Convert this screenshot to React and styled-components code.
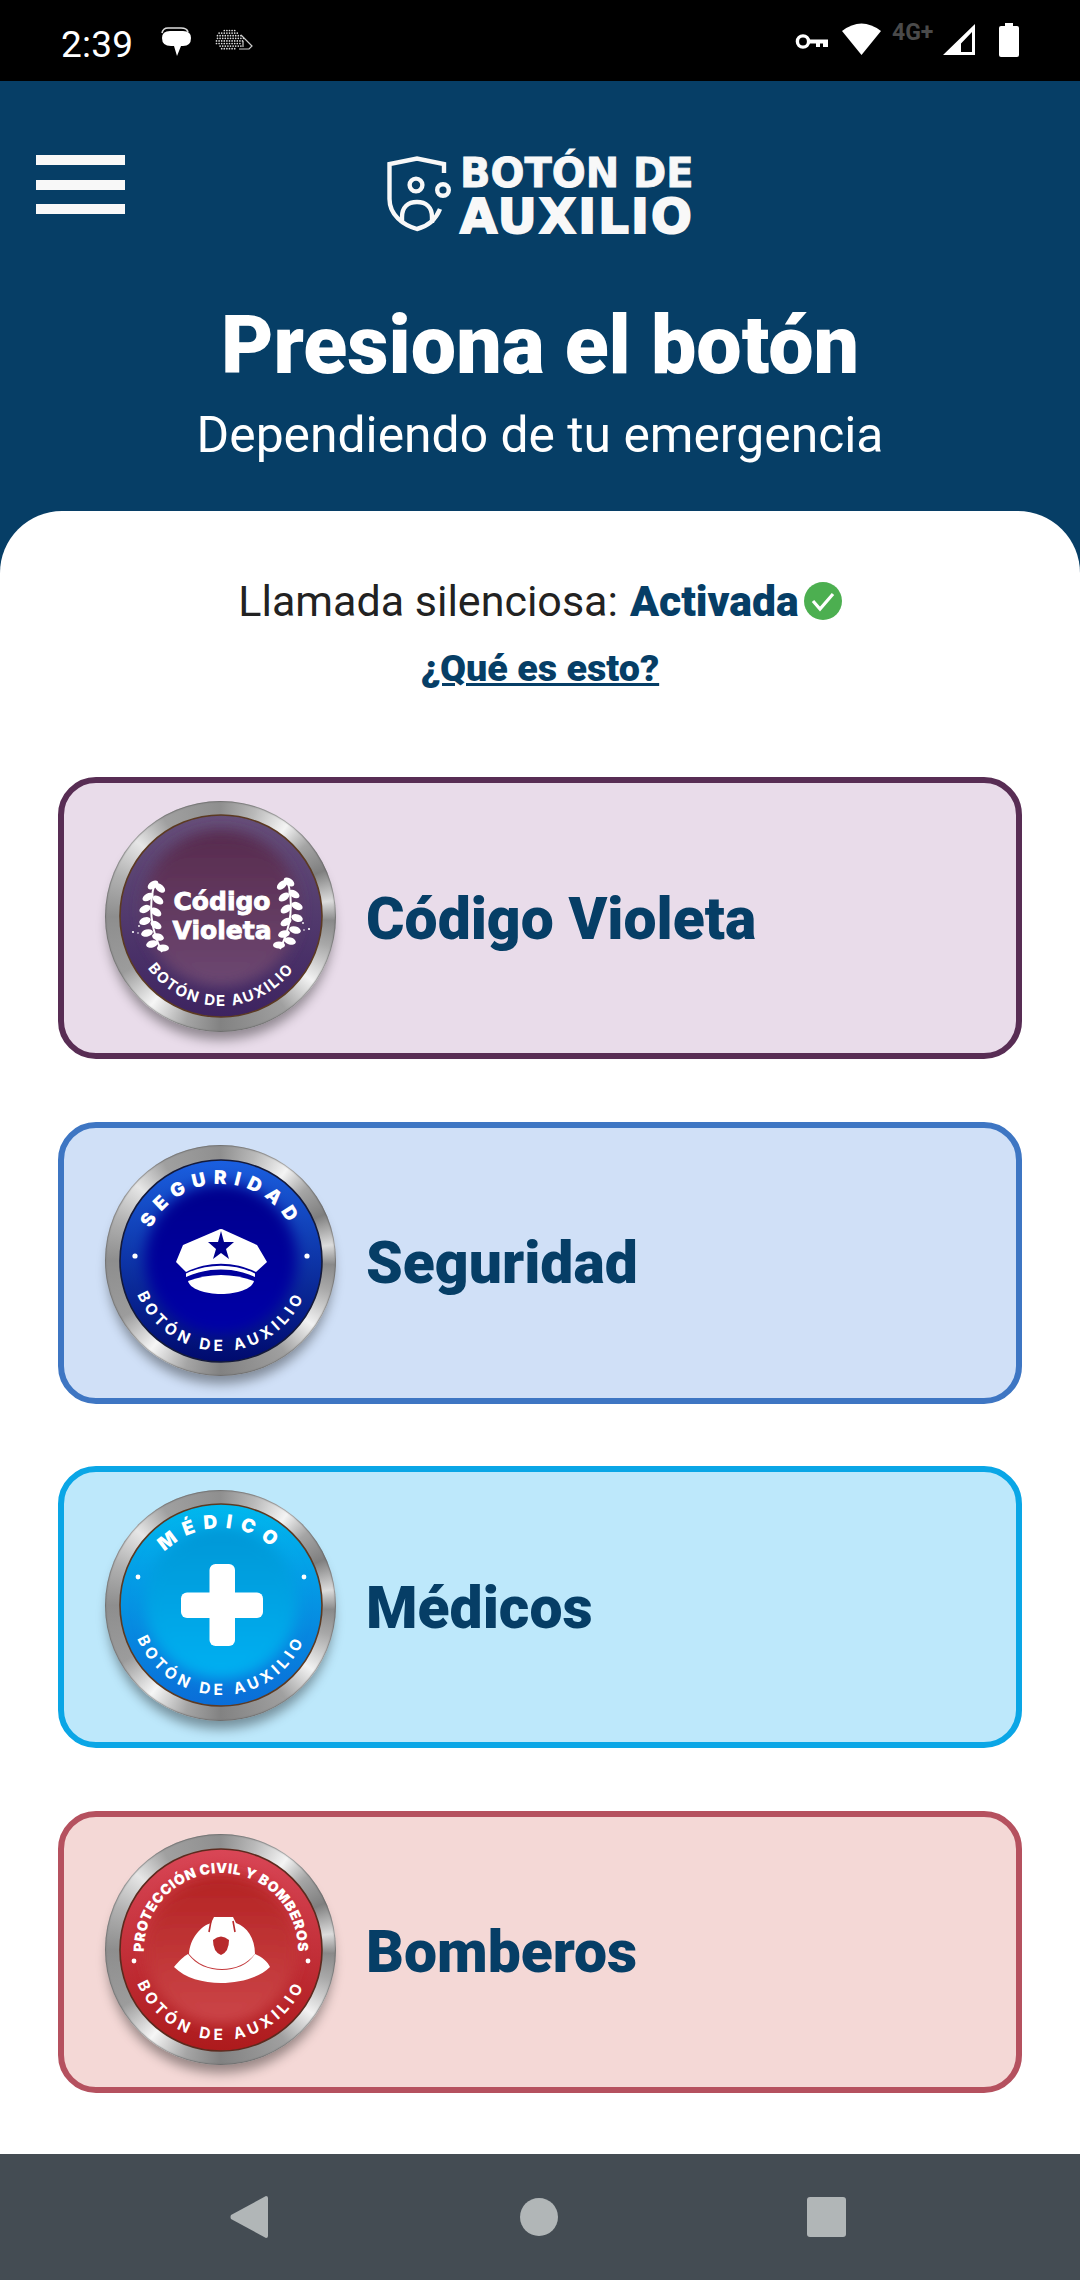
import { styled, createGlobalStyle } from 'styled-components';

const GlobalStyle = createGlobalStyle`
	html, body {
		margin: 0;
		padding: 0;
		background: #fff;
	}
	body {
		font-family: Roboto, "Liberation Sans", sans-serif;
	}
`;

const BLUE = '#063e66';
const WIDE_FONT = '"DejaVu Sans", Inter, sans-serif';
const BADGE_FONT = 'Inter, "Open Sans", sans-serif';

const Page = styled.div`
	width: 1080px;
	height: 2280px;
	display: flex;
	flex-direction: column;
	background: ${BLUE};
	overflow: hidden;
`;

const StatusBar = styled.div`
	height: 81px;
	flex: none;
	background: #000;
	display: flex;
	justify-content: space-between;
	padding: 0 61px 0 61px;
	box-sizing: border-box;
`;

const StatusGroup = styled.div`
	display: flex;
	align-items: flex-start;
	padding-top: 23px;
`;

const Time = styled.span`
	color: #fff;
	font-size: 37px;
	line-height: 38px;
	margin-top: 3px;
	margin-right: 27px;
	letter-spacing: 0.2px;
`;

const StatusIcon = styled.svg`
	display: block;
	flex: none;
	margin-top: ${(p) => p.$top || 0}px;
	margin-left: ${(p) => p.$left || 0}px;
`;

const NetworkLabel = styled.span`
	color: #4a4a4a;
	font-size: 23px;
	font-weight: 700;
	line-height: 20px;
	margin-left: 11px;
	width: 44px;
	white-space: nowrap;
`;

const Header = styled.header`
	height: 430px;
	flex: none;
	padding-top: 65px;
	box-sizing: border-box;
	color: #fff;
	text-align: center;
`;

const TopRow = styled.div`
	display: grid;
	grid-template-columns: 1fr auto 1fr;
	padding: 0 36px;
	align-items: start;
`;

const Hamburger = styled.div`
	width: 89px;
	display: flex;
	flex-direction: column;
	gap: 14.5px;
	padding-top: 9px;
`;

const HamburgerBar = styled.span`
	height: 10px;
	background: #f8f8f8;
`;

const Logo = styled.div`
	display: flex;
	align-items: flex-start;
	gap: 8px;
	color: #f8f8f8;
	padding-top: 5px;
`;

const LogoMark = styled.svg`
	display: block;
	flex: none;
	margin-top: 4px;
`;

const LogoWords = styled.div`
	display: flex;
	flex-direction: column;
	text-align: left;
	font-family: ${WIDE_FONT};
	font-weight: 700;
`;

const LogoTop = styled.span`
	font-size: 40px;
	line-height: 44px;
	white-space: nowrap;
	-webkit-text-stroke: 0.8px #f8f8f8;
`;

const LogoBottom = styled.span`
	font-size: 48px;
	line-height: 36px;
	letter-spacing: 2.2px;
	white-space: nowrap;
	margin-top: 3px;
	-webkit-text-stroke: 2px #f8f8f8;
`;

const Title = styled.h1`
	margin: 64px 0 0;
	font-size: 80.7px;
	font-weight: 900;
	line-height: 96px;
`;

const Subtitle = styled.p`
	margin: 11px 0 0;
	font-size: 49.8px;
	font-weight: 400;
	line-height: 60px;
`;

const Sheet = styled.main`
	flex: 1;
	background: #fff;
	border-radius: 62px 62px 0 0;
	padding-top: 66px;
	box-sizing: border-box;
`;

const SilentRow = styled.div`
	display: flex;
	justify-content: center;
	align-items: center;
	height: 48px;
	font-size: 43px;
	color: #222;
`;

const SilentState = styled.strong`
	font-size: 42.7px;
	font-weight: 900;
	color: ${BLUE};
	margin-left: 12px;
	margin-right: 5px;
`;

const WhatLink = styled.a`
	display: block;
	margin-top: 20px;
	text-align: center;
	font-size: 37.7px;
	font-weight: 900;
	line-height: 46px;
	color: ${BLUE};
	text-decoration: underline;
	text-decoration-thickness: 3px;
`;

const CardList = styled.div`
	display: flex;
	flex-direction: column;
	gap: 62.5px;
	margin: 86px 58px 0;
`;

const Card = styled.button`
	height: 282px;
	box-sizing: border-box;
	display: flex;
	align-items: center;
	gap: 30px;
	padding: 0 0 0 41px;
	border: 6px solid ${(p) => p.$border};
	border-radius: 38px;
	background: ${(p) => p.$fill};
	font-family: inherit;
	text-align: left;
`;

const CardLabel = styled.span`
	font-size: 58.8px;
	font-weight: 900;
	color: ${BLUE};
`;

const Ring = styled.div`
	width: 231px;
	height: 231px;
	flex: none;
	margin-bottom: 4px;
	border-radius: 50%;
	display: flex;
	align-items: center;
	justify-content: center;
	background: conic-gradient(
		#8f8f8f 0deg,
		#b9b9b9 18deg,
		#f4f4f4 36deg,
		#a5a5a5 50deg,
		#7f7f7f 66deg,
		#dcdcdc 82deg,
		#8a8a8a 92deg,
		#a8a8a8 105deg,
		#f2f2f2 125deg,
		#a0a0a0 145deg,
		#828282 180deg,
		#a5a5a5 198deg,
		#f6f6f6 218deg,
		#9c9c9c 240deg,
		#8e8e8e 270deg,
		#b2b2b2 292deg,
		#e6e6e6 312deg,
		#a0a0a0 330deg,
		#8f8f8f 360deg
	);
	box-shadow:
		0 11px 12px -3px rgba(0, 0, 0, 0.38),
		inset 0 0 1px 1px rgba(90, 90, 90, 0.55);
`;

const BadgeText = styled.text`
	font-family: ${(p) => p.$font || BADGE_FONT};
	font-weight: ${(p) => p.$weight || 700};
	font-size: ${(p) => p.$size}px;
	letter-spacing: ${(p) => p.$spacing || 0}px;
	fill: #fff;
	stroke: #fff;
	stroke-width: ${(p) => p.$stroke || 0}px;
	text-anchor: middle;
`;

const NavBar = styled.nav`
	height: 126px;
	flex: none;
	background: #444c53;
	display: flex;
	align-items: center;
	padding: 0 234px 0 230px;
	justify-content: space-between;
	box-sizing: border-box;
`;

const NavIcon = styled.svg`
	display: block;
	fill: #b1b6b7;
	margin-left: ${(p) => p.$shift || 0}px;
`;

const TOP_ARC = 'M25 102 A77 77 0 0 1 179 102';
const BOTTOM_ARC = 'M12 102 A90 90 0 0 0 192 102';

const Disc = ({ id, outerTop, outerBottom, innerTop, innerBottom, rim, innerSize = 76, innerY = 100, children }) => (
	<svg width="204" height="204" viewBox="0 0 204 204">
		<defs>
			<linearGradient id={`${id}-outer`} x1="0" y1="0" x2="0" y2="1">
				<stop offset="0" stopColor={outerTop} />
				<stop offset="1" stopColor={outerBottom} />
			</linearGradient>
			<linearGradient id={`${id}-inner`} x1="0" y1="0" x2="0" y2="1">
				<stop offset="0" stopColor={innerTop} />
				<stop offset="1" stopColor={innerBottom} />
			</linearGradient>
			<filter id={`${id}-blur`} x="-20%" y="-20%" width="140%" height="140%">
				<feGaussianBlur stdDeviation="7" />
			</filter>
			<path id={`${id}-top`} d={TOP_ARC} />
			<path id={`${id}-bottom`} d={BOTTOM_ARC} />
		</defs>
		<circle cx="102" cy="102" r="101" fill={`url(#${id}-outer)`} stroke={rim} strokeWidth="1.6" />
		<circle cx="102" cy={innerY} r={innerSize} fill={`url(#${id}-inner)`} filter={`url(#${id}-blur)`} />
		{children}
	</svg>
);

const BottomLabel = ({ id, size = 15.5, spacing = 4.2 }) => (
	<BadgeText $size={size} $spacing={spacing}>
		<textPath href={`#${id}-bottom`} startOffset="50%">
			BOTÓN DE AUXILIO
		</textPath>
	</BadgeText>
);

const TopLabel = ({ id, size, spacing, weight, children }) => (
	<BadgeText $size={size} $spacing={spacing} $weight={weight}>
		<textPath href={`#${id}-top`} startOffset="50%">
			{children}
		</textPath>
	</BadgeText>
);

const LEAVES = [
	[34, 71, -35],
	[41, 74, 40],
	[29, 83, -30],
	[39, 86, 35],
	[26, 95, -25],
	[37, 98, 35],
	[26, 107, -20],
	[37, 111, 30],
	[28, 119, -15],
	[39, 123, 15],
	[33, 130, -15],
	[44, 134, 0],
];

const Laurel = ({ mirrored }) => (
	<g transform={mirrored ? 'translate(204 -3) scale(-1 1)' : undefined}>
		<path d="M36 68 C31 85 29 110 43 138" fill="none" stroke="#fff" strokeWidth="2" />
		{LEAVES.map(([x, y, angle]) => (
			<ellipse key={`${x}-${y}`} cx={x} cy={y} rx="6" ry="3.6" fill="#fff" transform={`rotate(${angle} ${x} ${y})`} />
		))}
		<circle cx="20" cy="112" r="0.9" fill="#fff" />
		<circle cx="14" cy="118" r="1.1" fill="#fff" />
		<circle cx="19" cy="119" r="0.8" fill="#fff" />
	</g>
);

const VioletBadge = () => (
	<Disc
		id="violet"
		outerTop="#66507a"
		outerBottom="#3d2360"
		innerTop="#572a4d"
		innerBottom="#6d4872"
		rim="#5c3a22"
		innerSize={78}
		innerY={94}
	>
		<Laurel />
		<Laurel mirrored />
		<BadgeText x="103" y="96" $size={25} $font={WIDE_FONT} $stroke={0.9}>
			Código
		</BadgeText>
		<BadgeText x="103" y="125" $size={25} $font={WIDE_FONT} $stroke={0.9}>
			Violeta
		</BadgeText>
		<BottomLabel id="violet" size={15} spacing={1.8} />
	</Disc>
);

const SecurityBadge = () => (
	<Disc
		id="security"
		outerTop="#1a5fe0"
		outerBottom="#000a6e"
		innerTop="#00008c"
		innerBottom="#0000a8"
		rim="#141a3a"
	>
		<TopLabel id="security" size={19} spacing={7} weight={900}>
			SEGURIDAD
		</TopLabel>
		<circle cx="16" cy="97" r="2.6" fill="#fff" />
		<circle cx="188" cy="97" r="2.6" fill="#fff" />
		<path
			d="M99 71 Q102 69 105 71 L138 86 L148 103 L137 113 C115 102 89 102 67 113 L57 103 L64 86 Z"
			fill="#fff"
		/>
		<path d="M102 72 L105 83 L115 83 L107 90 L110 100 L102 94 L94 100 L97 90 L89 83 L99 83 Z" fill="#00008c" />
		<path d="M67 118 L67 114.5 C89 104 115 104 136 114.5 L136 118 C115 108 89 108 67 118 Z" fill="#fff" />
		<path d="M69 122 C90 114 114 114 135 122 C133 130 118 135 102 135 C86 135 71 130 69 122 Z" fill="#fff" />
		<BottomLabel id="security" />
	</Disc>
);

const MedicalBadge = () => (
	<Disc
		id="medical"
		outerTop="#00b8ee"
		outerBottom="#0a6dd8"
		innerTop="#0097d6"
		innerBottom="#00b0f2"
		rim="#5c3a22"
	>
		<TopLabel id="medical" size={19} spacing={8} weight={900}>
			MÉDICO
		</TopLabel>
		<circle cx="19" cy="74" r="2.4" fill="#fff" />
		<circle cx="185" cy="74" r="2.4" fill="#fff" />
		<rect x="62" y="89.5" width="82" height="25.5" rx="6" fill="#fff" />
		<rect x="90.5" y="61" width="25.5" height="82" rx="6" fill="#fff" />
		<BottomLabel id="medical" />
	</Disc>
);

const FireBadge = () => (
	<Disc
		id="fire"
		outerTop="#d94656"
		outerBottom="#ad1a1c"
		innerTop="#b32222"
		innerBottom="#cc4649"
		rim="#5c2a1e"
	>
		<TopLabel id="fire" size={14} spacing={0.5} weight={900}>
			PROTECCIÓN CIVIL Y BOMBEROS
		</TopLabel>
		<circle cx="15" cy="113" r="2.4" fill="#fff" />
		<circle cx="189" cy="113" r="2.4" fill="#fff" />
		<path
			d="M70 106 C71 90 82 78 92 75 L95 69 L114 69 L117 75 C128 79 136 90 136 106 C128 116 116 121 103 121 C90 121 78 116 70 106 Z"
			fill="#fff"
		/>
		<path d="M55 119 C60 113 65 108 69 106 C77 117 90 122 103 122 C116 122 129 117 136 106 C143 109 149 114 151 119 C140 130 120 135 102 135 C84 135 66 130 55 119 Z" fill="#fff" />
		<path d="M94 92 Q102 85 110 92 Q110 104 102 107 Q94 104 94 92 Z" fill="#b82a2c" />
		<path d="M92 73 L90 84 M114 73 L116 84" stroke="#b82a2c" strokeWidth="1.6" />
		<BottomLabel id="fire" />
	</Disc>
);

const CARDS = [
	{ label: 'Código Violeta', border: '#582d54', fill: '#e9dcea', Badge: VioletBadge },
	{ label: 'Seguridad', border: '#3e76c3', fill: '#d0e0f7', Badge: SecurityBadge },
	{ label: 'Médicos', border: '#0aa6e6', fill: '#bde8fb', Badge: MedicalBadge },
	{ label: 'Bomberos', border: '#b5515f', fill: '#f4d8d6', Badge: FireBadge },
];

// puntos del lomo del erizo de la barra de estado
const HEDGEHOG_DOTS = [];
for (let y = 1.5; y < 21; y += 2.6) {
	for (let x = 1.5; x < 30; x += 2.6) {
		const dx = (x - 14) / 14;
		const dy = (y - 11) / 10.5;
		if (dx * dx + dy * dy <= 1) HEDGEHOG_DOTS.push([x + (Math.round(y) % 2), y]);
	}
}

const App = () => (
	<>
		<GlobalStyle />
		<Page>
			<StatusBar>
				<StatusGroup>
					<Time>2:39</Time>
					<StatusIcon width="32" height="30" viewBox="0 0 32 30" $top={4}>
						<path d="M2 6 Q3 1 8 1 H21 Q27 1 28 5" fill="none" stroke="#ddd" strokeWidth="1.6" />
						<path d="M10 4 H23 Q31 4 31 11 Q31 19 23 19 H21 L17 29 L14 19 H11 Q2 19 2 11 Q2 4 10 4 Z" fill="#fff" />
					</StatusIcon>
					<StatusIcon width="38" height="22" viewBox="0 0 38 22" $left={23} $top={6}>
						{HEDGEHOG_DOTS.map(([x, y]) => (
							<circle key={`${x}-${y}`} cx={x} cy={y} r="0.85" fill="#ddd" />
						))}
						<path d="M26 6 L37 17 L34 20 H24 M28 12 V18" fill="none" stroke="#ccc" strokeWidth="1.2" />
					</StatusIcon>
				</StatusGroup>
				<StatusGroup>
					<StatusIcon width="33" height="18" viewBox="0 0 33 18" $top={10}>
						<circle cx="8" cy="8.5" r="5.6" fill="none" stroke="#fff" strokeWidth="3.4" />
						<path d="M14 6.5 H33 V14 H28 V10.5 H25 V14 H21 V10.5 H14 Z" fill="#fff" />
					</StatusIcon>
					<StatusIcon width="39" height="32" viewBox="0 0 39 32" $left={14}>
						<path d="M0 8 Q19.5 -7 39 8 L19.5 32 Z" fill="#fff" />
					</StatusIcon>
					<NetworkLabel>4G+</NetworkLabel>
					<StatusIcon width="32" height="31" viewBox="0 0 32 31" $top={1} $left={7}>
						<path fillRule="evenodd" d="M32 0 V31 H0 Z M29 8 L18 19.5 V28 H29 Z" fill="#fff" />
					</StatusIcon>
					<StatusIcon width="20" height="34" viewBox="0 0 20 34" $left={24}>
						<path d="M6 0 H14 V3 H18 Q20 3 20 5 V32 Q20 34 18 34 H2 Q0 34 0 32 V5 Q0 3 2 3 H6 Z" fill="#fff" />
					</StatusIcon>
				</StatusGroup>
			</StatusBar>
			<Header>
				<TopRow>
					<Hamburger>
						<HamburgerBar />
						<HamburgerBar />
						<HamburgerBar />
					</Hamburger>
					<Logo>
						<LogoMark width="66" height="78" viewBox="0 0 66 78" fill="none" stroke="#f8f8f8" strokeWidth="4.4">
							<path d="M58 18 V9 L31 3.5 L3.5 9 V44 C3.5 60 17 70 31 74 C43 71 50 64 54 54" />
							<circle cx="30" cy="30" r="6.4" />
							<circle cx="57" cy="35" r="5.8" />
							<path d="M16 68 V62 C16 52 22 47 31 47 C40 47 46 52 46 62 V68" />
						</LogoMark>
						<LogoWords>
							<LogoTop>BOTÓN DE</LogoTop>
							<LogoBottom>AUXILIO</LogoBottom>
						</LogoWords>
					</Logo>
					<span />
				</TopRow>
				<Title>Presiona el botón</Title>
				<Subtitle>Dependiendo de tu emergencia</Subtitle>
			</Header>
			<Sheet>
				<SilentRow>
					Llamada silenciosa:
					<SilentState>Activada</SilentState>
					<svg width="38" height="38" viewBox="0 0 38 38">
						<circle cx="19" cy="19" r="19" fill="#4caf50" />
						<path d="M9 19 L16 27 L29 12" fill="none" stroke="#fff" strokeWidth="3.2" />
					</svg>
				</SilentRow>
				<WhatLink>¿Qué es esto?</WhatLink>
				<CardList>
					{CARDS.map(({ label, border, fill, Badge }) => (
						<Card key={label} $border={border} $fill={fill}>
							<Ring>
								<Badge />
							</Ring>
							<CardLabel>{label}</CardLabel>
						</Card>
					))}
				</CardList>
			</Sheet>
			<NavBar>
				<NavIcon width="38" height="42" viewBox="0 0 38 42">
					<path d="M36 0 Q38 0 38 2 V40 Q38 42 36 42 L1 23 Q0 21 1 19 Z" />
				</NavIcon>
				<NavIcon width="38" height="38" viewBox="0 0 38 38" $shift={3}>
					<circle cx="19" cy="19" r="19" />
				</NavIcon>
				<NavIcon width="39" height="40" viewBox="0 0 39 40">
					<rect width="39" height="40" rx="3" />
				</NavIcon>
			</NavBar>
		</Page>
	</>
);

export default App;
